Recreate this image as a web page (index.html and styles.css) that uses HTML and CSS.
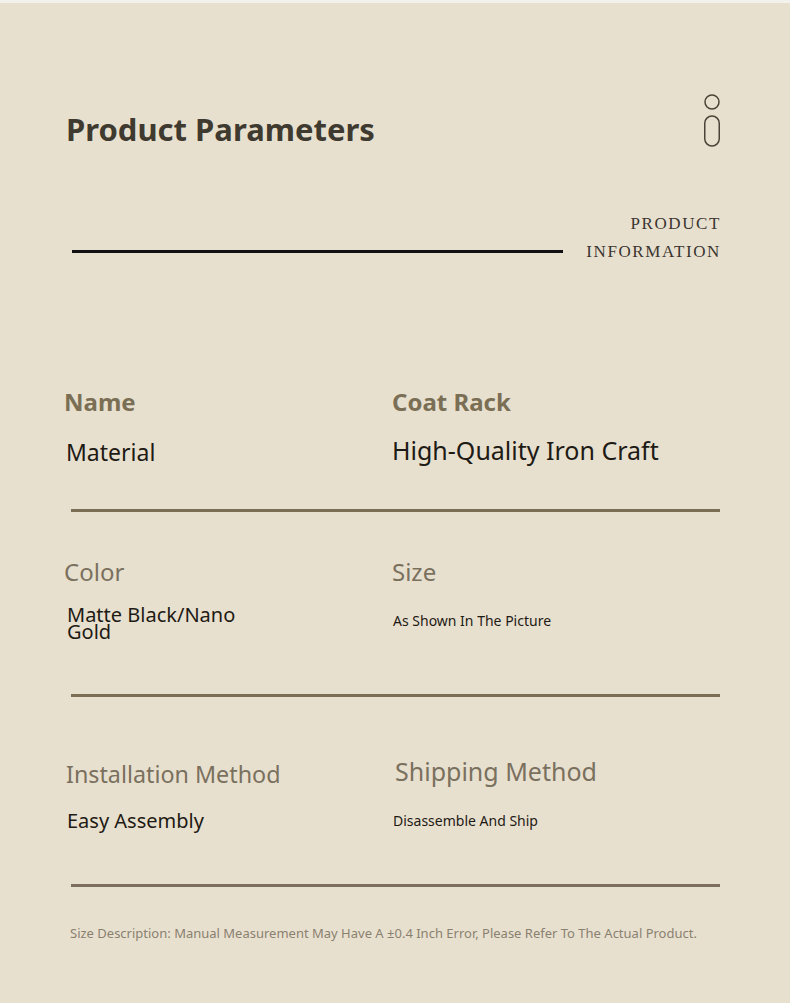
FILE: index.html
```html
<!DOCTYPE html>
<html lang="en">
<head>
<meta charset="utf-8">
<title>Product Parameters</title>
<link rel="stylesheet" href="styles.css">
</head>
<body>
<div class="page">
  <header class="header">
    <h1 class="title">Product Parameters</h1>
    <svg class="info-icon" width="18" height="54" viewBox="0 0 18 54" aria-hidden="true">
      <circle cx="9" cy="8" r="7" fill="none" stroke="#4a4438" stroke-width="1.5"/>
      <rect x="1.75" y="22" width="14.5" height="30" rx="7.25" fill="none" stroke="#4a4438" stroke-width="1.5"/>
    </svg>
  </header>
  <div class="subhead">
    <div class="rule-black"></div>
    <div class="eng">PRODUCT<br>INFORMATION</div>
  </div>

  <section class="row row1">
    <div class="cell">
      <div class="label bold">Name</div>
      <div class="value v-material">Material</div>
    </div>
    <div class="cell">
      <div class="label bold">Coat Rack</div>
      <div class="value v-iron">High-Quality Iron Craft</div>
    </div>
  </section>
  <div class="divider d1"></div>

  <section class="row row2">
    <div class="cell">
      <div class="label">Color</div>
      <div class="value v-color">Matte Black/Nano<br>Gold</div>
    </div>
    <div class="cell">
      <div class="label">Size</div>
      <div class="value small">As Shown In The Picture</div>
    </div>
  </section>
  <div class="divider d2"></div>

  <section class="row row3">
    <div class="cell install">
      <div class="label">Installation Method</div>
      <div class="value v-easy">Easy Assembly</div>
    </div>
    <div class="cell">
      <div class="label big">Shipping Method</div>
      <div class="value small ship">Disassemble And Ship</div>
    </div>
  </section>
  <div class="divider d3"></div>

  <p class="note">Size Description: Manual Measurement May Have A ±0.4 Inch Error, Please Refer To The Actual Product.</p>
</div>
</body>
</html>
```

FILE: styles.css
```css
html, body {
  margin: 0;
  padding: 0;
}
body {
  background: #e8e0cf;
  font-family: "Noto Sans", "Open Sans", sans-serif;
  width: 790px;
  height: 1003px;
  overflow: hidden;
}
.page {
  border-top: 3px solid #f3f1ec;
  padding: 0 70px 0 64px;
}
.header {
  display: flex;
  justify-content: space-between;
  align-items: flex-start;
  padding-top: 91px;
}
.title {
  margin: 17px 0 0 2px;
  font-size: 31px;
  font-weight: 700;
  color: #3f3a30;
  line-height: 36px;
}
.info-icon {
  display: block;
  margin-right: -1px;
}
.subhead {
  display: flex;
  align-items: flex-start;
  margin-top: 62px;
  padding-left: 8px;
}
.rule-black {
  width: 491px;
  height: 3px;
  background: #111;
  margin-top: 40px;
}
.eng {
  margin-left: auto;
  margin-right: -1px;
  text-align: right;
  font-family: "Liberation Serif", "DejaVu Serif", serif;
  font-size: 17px;
  line-height: 28px;
  letter-spacing: 1.6px;
  color: #3a3530;
}
.row {
  display: grid;
  grid-template-columns: 328px 1fr;
  align-items: start;
}
.row1 { margin-top: 120px; }
.row2 { margin-top: 44px; }
.row3 { margin-top: 58px; }
.cell {
  display: flex;
  flex-direction: column;
}
.label {
  font-size: 24px;
  line-height: 32px;
  color: #7a705e;
}
.label.bold {
  font-weight: 700;
  color: #7a6f55;
}
.install { padding-top: 3px; padding-left: 2px; }
.install .label { font-size: 23.3px; }
.label.big {
  font-size: 25px;
  padding-left: 3px;
}
.value {
  color: #1e1a14;
  margin-left: 2px;
}
.v-material { font-size: 23px; line-height: 32px; margin-top: 18px; }
.v-iron { font-size: 25px; line-height: 32px; margin-top: 16px; margin-left: 0; }
.v-color { font-size: 20px; line-height: 17px; margin-top: 18px; margin-left: 3px; }
.v-easy { font-size: 20px; line-height: 30px; margin-top: 16px; margin-left: 1px; }
.small { font-size: 14px; line-height: 20px; margin-top: 23px; margin-left: 1px; }
.small.ship { margin-top: 24px; }
.divider {
  height: 3px;
  background: #7a6e55;
  margin: 41px 0 0 7px;
}
.d2 { margin-top: 54px; }
.d3 { margin-top: 48px; background: #7d6f60; }
.note {
  margin: 36px 0 0 6px;
  font-size: 13px;
  line-height: 20px;
  color: #8a806f;
}
```
